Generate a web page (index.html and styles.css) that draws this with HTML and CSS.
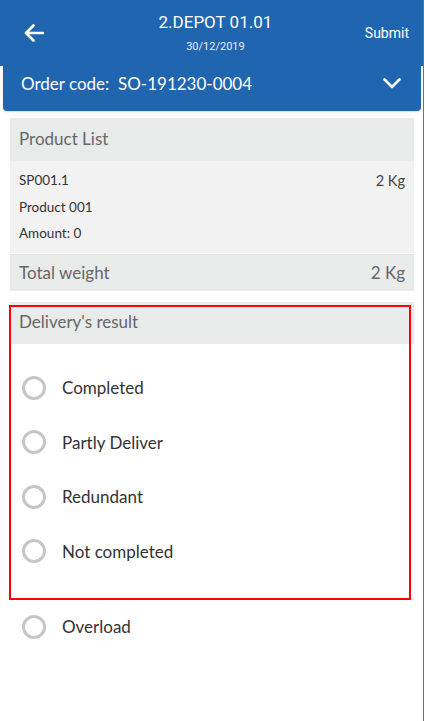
FILE: index.html
```html
<!DOCTYPE html>
<html>
<head>
<meta charset="utf-8">
<link rel="stylesheet" href="styles.css">
</head>
<body>
<div class="screen">
  <header class="topbar">
    <button class="back" aria-label="Back">
      <svg width="20" height="18" viewBox="0 0 20 18"><path d="M19 9H2.5M9.5 1.5L2 9l7.5 7.5" fill="none" stroke="#fff" stroke-width="2.6" stroke-linecap="round" stroke-linejoin="round"/></svg>
    </button>
    <div class="title">
      <div class="title-main">2.DEPOT 01.01</div>
      <div class="title-sub">30/12/2019</div>
    </div>
    <button class="submit">Submit</button>
  </header>
  <div class="orderbar">
    <span class="order-text">Order code:&nbsp; SO-191230-0004</span>
    <svg width="18" height="11" viewBox="0 0 18 11"><path d="M1.5 1.5L9 9l7.5-7.5" fill="none" stroke="#fff" stroke-width="2.6" stroke-linecap="round" stroke-linejoin="round"/></svg>
  </div>

  <main class="content">
    <section class="products">
      <div class="sec-head">Product List</div>
      <div class="prod-body">
        <div class="prod-line"><span>SP001.1</span><span class="kg">2 Kg</span></div>
        <div class="prod-line"><span>Product 001</span></div>
        <div class="prod-line"><span>Amount: 0</span></div>
      </div>
      <div class="total"><span>Total weight</span><span>2 Kg</span></div>
    </section>

    <section class="delivery">
      <div class="sec-head">Delivery's result</div>
      <ul class="options">
        <li class="option"><span class="radio"></span>Completed</li>
        <li class="option"><span class="radio"></span>Partly Deliver</li>
        <li class="option"><span class="radio"></span>Redundant</li>
        <li class="option"><span class="radio"></span>Not completed</li>
      </ul>
      <div class="highlight"></div>
    </section>
    <div class="option extra"><span class="radio"></span>Overload</div>
  </main>
</div>
</body>
</html>
```

FILE: styles.css
```css
* { box-sizing: border-box; }
html, body { margin: 0; padding: 0; background: #fff; }
body { font-family: "Lato", "Roboto", sans-serif; }
.screen {
  width: 424px;
  height: 721px;
  border-right: 1px solid #6f6f6f;
  background: #fff;
}
.topbar {
  height: 66px;
  background: #1f65b0;
  display: flex;
  align-items: center;
  color: #fff;
  padding: 0 14px 0 22px;
}
.back {
  background: none; border: 0; padding: 0;
  width: 24px; height: 24px;
  display: flex; align-items: center; justify-content: center;
}
.title {
  flex: 1;
  text-align: center;
  padding-left: 20px;
}
.title-main {
  font-family: "Roboto", sans-serif;
  font-size: 17px;
  line-height: 20px;
  margin-top: -1px;
}
.title-sub {
  font-family: "Roboto", sans-serif;
  font-size: 11px;
  line-height: 14px;
  margin-top: 8px;
  color: #e8eef7;
}
.submit {
  background: none; border: 0; padding: 0;
  color: #fff;
  font-family: "Roboto", sans-serif;
  font-size: 14px;
}
.orderbar {
  margin: 0 2px 0 3px;
  height: 45px;
  background: #1f65b0;
  border-radius: 0 0 4px 4px;
  display: flex;
  align-items: center;
  justify-content: space-between;
  padding: 0 20px 11px 18px;
  color: #fff;
  font-size: 17px;
  box-shadow: 0 1px 2px rgba(0,0,0,0.15);
}
.content {
  padding: 7px 9px 0 10px;
}
.sec-head {
  background: #e9ebea;
  color: #666;
  font-size: 17px;
  height: 43px;
  display: flex;
  align-items: center;
  padding: 0 0 3px 9px;
}
.prod-body {
  background: #f2f2f2;
  padding: 6px 9px 6px 9px;
  border-bottom: 1px solid #fff;
}
.prod-line {
  height: 26.5px;
  display: flex;
  align-items: center;
  justify-content: space-between;
  font-size: 13.5px;
  color: #333;
}
.prod-line .kg { font-size: 14.5px; color: #444; }
.total {
  background: #e9ebea;
  height: 37px;
  display: flex;
  align-items: center;
  justify-content: space-between;
  padding: 0 9px;
  color: #666;
  font-size: 17px;
}
.delivery {
  position: relative;
  margin-top: 11px;
  border-bottom: 1px solid #e6e6e6;
  padding-bottom: 20px;
}
.delivery .sec-head { height: 42px; }
.options {
  list-style: none;
  margin: 0;
  padding: 17px 0 0 0;
}
.option {
  height: 54.5px;
  display: flex;
  align-items: center;
  font-size: 17px;
  color: #333;
  padding-left: 12px;
}
.radio {
  width: 24px;
  height: 24px;
  border: 3px solid #c6c6c6;
  border-radius: 50%;
  margin-right: 16px;
  flex: none;
}
.extra { height: 54px; }
.highlight {
  position: absolute;
  left: -1px;
  top: 3px;
  right: 3px;
  bottom: -1px;
  border: 2px solid #ff0000;
  pointer-events: none;
}
```
